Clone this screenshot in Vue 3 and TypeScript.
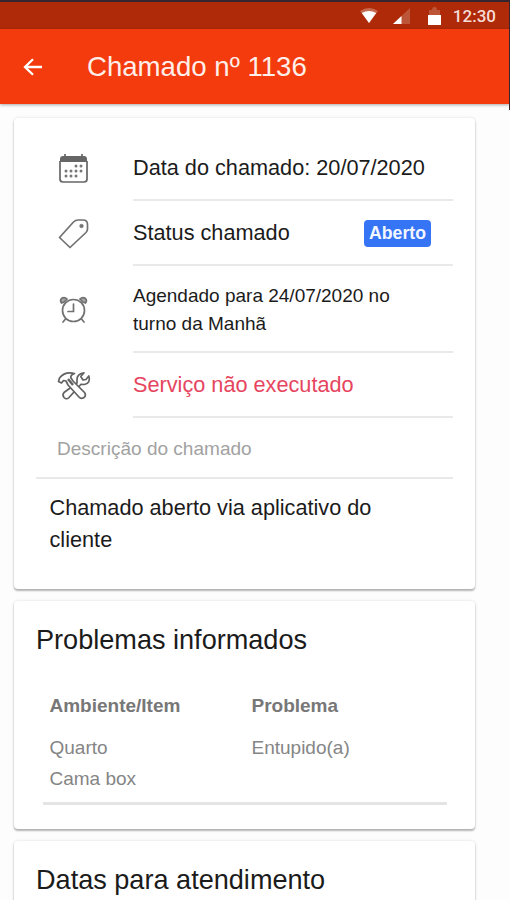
<script setup lang="ts">
interface Problem {
  place: string
  item: string
  problem: string
}

const ticketNumber = 1136
const problems: Problem[] = [{ place: 'Quarto', item: 'Cama box', problem: 'Entupido(a)' }]
const calendarDots: [number, number][] = [
  [17, 13], [22, 13],
  [7, 18], [12, 18], [17, 18], [22, 18],
  [7, 23], [12, 23], [17, 23],
]
</script>

<template>
  <div class="screen">
    <div class="status-bar">
      <svg class="wifi" viewBox="0 0 18 16">
        <path d="M0 3Q9-3 18 3L9 15Z" fill="#c7694f" />
        <path d="M1.800 5Q9 1 16.200 5L9 15Z" fill="#fff" />
      </svg>
      <svg class="signal" viewBox="0 0 18 16">
        <path d="M0 16L17 0V16Z" fill="#bd5638" />
        <path d="M0 16L8.500 8V16Z" fill="#fff" />
      </svg>
      <svg class="battery" viewBox="0 0 13 18">
        <path d="M1 3H4Q4 0 6.500 0T9 3H12V8H1Z" fill="#bd5638" />
        <path d="M0 8H13V18H0Z" fill="#fff" />
      </svg>
      <span>12:30</span>
    </div>
    <header class="toolbar">
      <svg viewBox="0 0 20 18">
        <path d="M10 1.200L2 9l8 7.800M2.200 9H19" fill="none" stroke="#fff" stroke-width="2.300" />
      </svg>
      <h1>Chamado nº {{ ticketNumber }}</h1>
      <i class="frame-edge"></i>
    </header>

    <main>
      <section class="card ticket">
        <div class="row first">
          <svg class="icon" viewBox="0 0 32 32">
            <path d="M2 9V6Q2 3 5 3H26Q29 3 29 6V9Z" fill="#666" />
            <path d="M2 8V26Q2 29 5 29H26Q29 29 29 26V8M7 1V5M24 1V5" fill="none" stroke="#666" stroke-width="1.700" />
            <circle v-for="([x, y], i) in calendarDots" :key="i" :cx="x + 1" :cy="y" r="1.500" fill="#777" />
          </svg>
          <div class="cell"><span>Data do chamado: 20/07/2020</span></div>
        </div>
        <div class="row">
          <svg class="icon" viewBox="0 0 32 32">
            <path d="M1.500 19.500L15.500 4Q17.500 2 20 2H25Q29.500 2 29.500 6.500V11Q29.500 13 28 14.500L12 29.500Z" fill="none" stroke="#717171" stroke-width="1.700" stroke-linejoin="round" />
            <circle cx="23.500" cy="8" r="1.800" fill="#777" stroke="#666" stroke-width=".6" />
          </svg>
          <div class="cell"><span>Status chamado</span><b class="badge">Aberto</b></div>
        </div>
        <div class="row scheduled">
          <svg class="icon" viewBox="0 0 32 32">
            <g fill="none" stroke="#717171" stroke-width="1.700" stroke-linecap="round">
              <circle cx="15.500" cy="16.500" r="11" />
              <path d="M15.500 10V17.500H10M7.500 25L5 28M23.500 25L26 28" />
              <path d="M3.500 9Q1.700 6.500 3.500 4.500Q6.500 2.500 9 5L6 8ZM27.500 9Q29.300 6.500 27.500 4.500Q24.500 2.500 22 5L25 8Z" fill="#aaa" />
            </g>
          </svg>
          <div class="cell"><span>Agendado para 24/07/2020 no turno da Manhã</span></div>
        </div>
        <div class="row last">
          <svg class="icon tools" viewBox="0 0 34 30">
            <g fill="#fff" stroke="#626262" stroke-width="1.700" stroke-linejoin="round">
              <path d="M20 9Q19.500 3 27 1.800L23.800 5.500L26 9L29 8.500L31.800 5Q34 12 27.500 13.500L24 13.300L12 26.500Q9.500 29 7 26.500Q5 24 7 21.500L20 12Z" />
              <path d="M1.500 10.500L2.500 7Q8 0 17.500 2.500Q13 4 14 7L16 10L27.500 21.500Q29.500 24.500 27 26.500Q24 28.500 22 26L11 14L9 10L6.500 9.500L4.500 12Z" />
              <path d="M11 8L16 14" stroke-width="2.500" />
            </g>
          </svg>
          <div class="cell danger"><span>Serviço não executado</span></div>
        </div>
        <p class="label">Descrição do chamado</p>
        <p class="description">Chamado aberto via aplicativo do cliente</p>
      </section>

      <section class="card problems">
        <h2>Problemas informados</h2>
        <div class="table">
          <div class="grid head"><span>Ambiente/Item</span><span>Problema</span></div>
          <div v-for="p in problems" :key="p.item" class="grid body">
            <span>{{ p.place }}<br />{{ p.item }}</span><span>{{ p.problem }}</span>
          </div>
        </div>
      </section>

      <section class="card dates">
        <h2>Datas para atendimento</h2>
      </section>
    </main>
  </div>
</template>

<style>
body { overflow: hidden; }
</style>

<style scoped>
* { box-sizing: border-box; margin: 0; }
.screen {
  height: 900px;
  overflow: hidden;
  display: flex;
  flex-direction: column;
  background: #fdfdfd;
  font-family: "Liberation Sans", Arial, sans-serif;
  font-size: 21.7px;
  color: #1b1b1b;
}
.status-bar {
  height: 29px;
  flex: none;
  display: flex;
  align-items: center;
  justify-content: flex-end;
  padding: 1px 14px 0 0;
  border-top: 2px solid #36252c;
  background: #ae2a09;
  color: #f6dcd5;
  font: 500 17px Roboto, sans-serif;
}
.wifi { width: 18px; height: 16px; margin-right: 15px; }
.signal { width: 18px; height: 16px; margin-right: 17px; }
.battery { width: 13px; height: 18px; margin-right: 12px; }
.toolbar {
  position: relative;
  height: 75px;
  flex: none;
  display: flex;
  align-items: center;
  gap: 44px;
  padding: 1px 0 0 23px;
  background: #f33b0d;
  box-shadow: 0 1px 3px #0005;
  color: #ffeee9;
}
.toolbar svg { width: 20px; height: 18px; }
.frame-edge {
  position: absolute;
  right: 0;
  top: -27px;
  width: 1px;
  height: 108px;
  background: #36252c;
}
h1 { font-size: 27.6px; font-weight: 400; line-height: 32px; }
main { display: flex; flex-direction: column; gap: 12px; padding: 14px 35px 0 14px; }
.card {
  flex: none;
  border-radius: 4px;
  background: #fff;
  box-shadow: 0 2px 2px #0004, 0 0 3px #0002;
}
.ticket { height: 471px; padding: 18px 22px 0; }
.row { height: 65px; display: flex; padding-left: 22px; }
.row.scheduled { height: 87px; font-size: 19px; line-height: 28px; }
.scheduled .cell { padding-top: 2px; }
.icon { flex: none; width: 32px; height: 32px; margin: 17px 43px 0 0; }
.scheduled .icon { margin-top: 28px; }
.icon.tools { width: 34px; height: 30px; margin: 18px 42px 0 -1px; }
.cell {
  flex: 1;
  display: flex;
  align-items: center;
  justify-content: space-between;
  padding-right: 22px;
  border-bottom: 2px solid #e9e9e9;
}
.first .cell { padding-right: 0; white-space: nowrap; }
.danger { color: #e64560; }
.badge {
  height: 27px;
  margin-top: 1px;
  padding: 0 5px;
  border-radius: 4px;
  background: #3474f5;
  color: #f2f6ff;
  font-size: 17.7px;
  line-height: 26px;
}
.label {
  height: 61px;
  padding-left: 21px;
  border-bottom: 2px solid #e9e9e9;
  color: #a2a2a2;
  font-size: 19.05px;
  line-height: 62px;
}
.description { padding: 13px 60px 0 13.500px; line-height: 32px; }
.problems { height: 228px; padding: 23px 28px 0 22px; }
h2 { font-size: 27.1px; font-weight: 400; line-height: 32px; }
.table {
  margin: 34px 0 0 7px;
  padding: 0 0 8px 6.500px;
  border-bottom: 3px solid #e4e4e4;
  color: #858585;
  font-size: 19px;
}
.grid { display: grid; grid-template-columns: 202px 1fr; line-height: 31px; }
.head { padding-bottom: 11px; color: #777; font-weight: 700; line-height: 31px; }
.dates { height: 120px; padding: 23px 22px; }
</style>
